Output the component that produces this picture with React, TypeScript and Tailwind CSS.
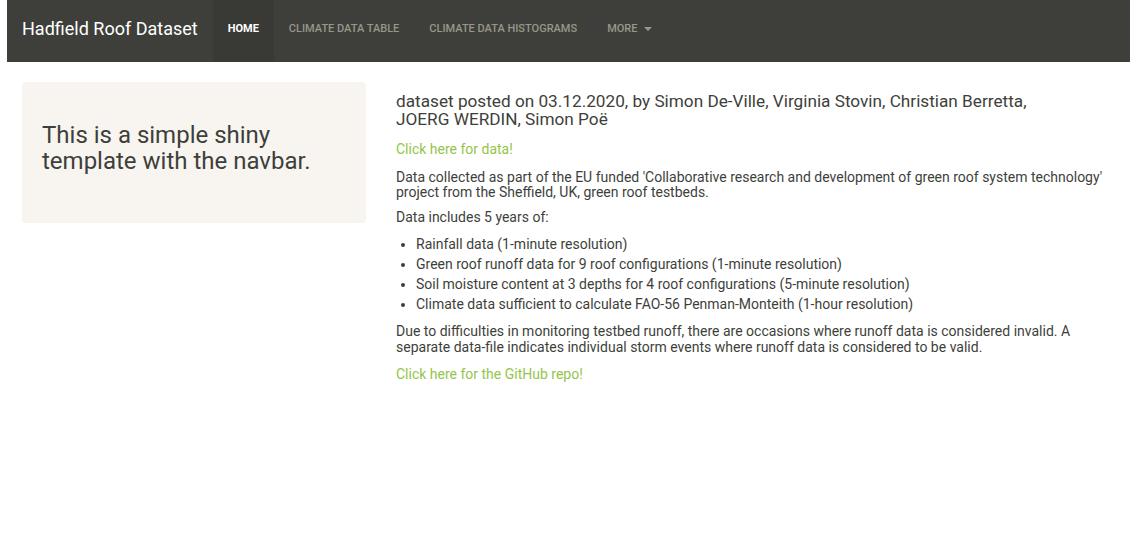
const items = [
  'Rainfall data (1-minute resolution)',
  'Green roof runoff data for 9 roof configurations (1-minute resolution)',
  'Soil moisture content at 3 depths for 4 roof configurations (5-minute resolution)',
  'Climate data sufficient to calculate FAO-56 Penman-Monteith (1-hour resolution)',
]

export default function App() {
  return (
    <div className="min-h-screen bg-white text-[#3e3f3a] font-['Roboto',sans-serif]">
      {/* Navbar */}
      <nav className="mx-[7px] h-[62px] bg-[#3e3f3a] flex items-stretch px-[15px]">
        <div className="flex items-center pr-[15px] pb-[5px] text-[18px] text-white">Hadfield Roof Dataset</div>
        <div className="flex items-stretch text-[11px] font-medium uppercase">
          <div className="flex items-center px-[15px] pb-[3px] bg-[#393a35] text-white font-bold">Home</div>
          <div className="flex items-center px-[15px] pb-[3px] text-[#98978b]">Climate Data Table</div>
          <div className="flex items-center px-[15px] pb-[3px] text-[#98978b]">Climate Data Histograms</div>
          <div className="flex items-center px-[15px] pb-[3px] text-[#98978b] gap-1">
            More
            <svg width="8" height="5" viewBox="0 0 8 5" className="ml-0.5">
              <path d="M0 0h8L4 4z" fill="#98978b" />
            </svg>
          </div>
        </div>
      </nav>

      {/* Content */}
      <main className="flex gap-[30px] px-[22px] pt-[20px]">
        <aside className="w-[344px] shrink-0">
          <div className="bg-[#f8f5f0] rounded h-[141px] px-5 pt-[40px]">
            <h2 className="text-[24px] leading-[26px] text-[#3e3f3a]">This is a simple shiny template with the navbar.</h2>
          </div>
        </aside>

        <section className="flex-1 text-[14px]">
          <h4 className="text-[17.2px] leading-[18px] pt-[10px] mb-[13px]">
            dataset posted on 03.12.2020, by Simon De-Ville, Virginia Stovin, Christian Berretta,
            <br />
            JOERG WERDIN, Simon Poë
          </h4>
          <p className="text-[#93c54b] leading-[16px] mb-[13px]">Click here for data!</p>
          <p className="leading-[15px] mb-[9px]">
            Data collected as part of the EU funded 'Collaborative research and development of green roof system technology' project from the Sheffield, UK, green roof testbeds.
          </p>
          <p className="leading-[16px] mb-[9px]">Data includes 5 years of:</p>
          <ul className="list-disc pl-[20px] mb-[9px]">
            {items.map((t) => (
              <li key={t} className="leading-[20px]">{t}</li>
            ))}
          </ul>
          <p className="leading-[16px] mb-[11px]">
            Due to difficulties in monitoring testbed runoff, there are occasions where runoff data is considered invalid. A separate data-file indicates individual storm events where runoff data is considered to be valid.
          </p>
          <p className="text-[#93c54b] leading-[16px]">Click here for the GitHub repo!</p>
        </section>
      </main>
    </div>
  )
}
